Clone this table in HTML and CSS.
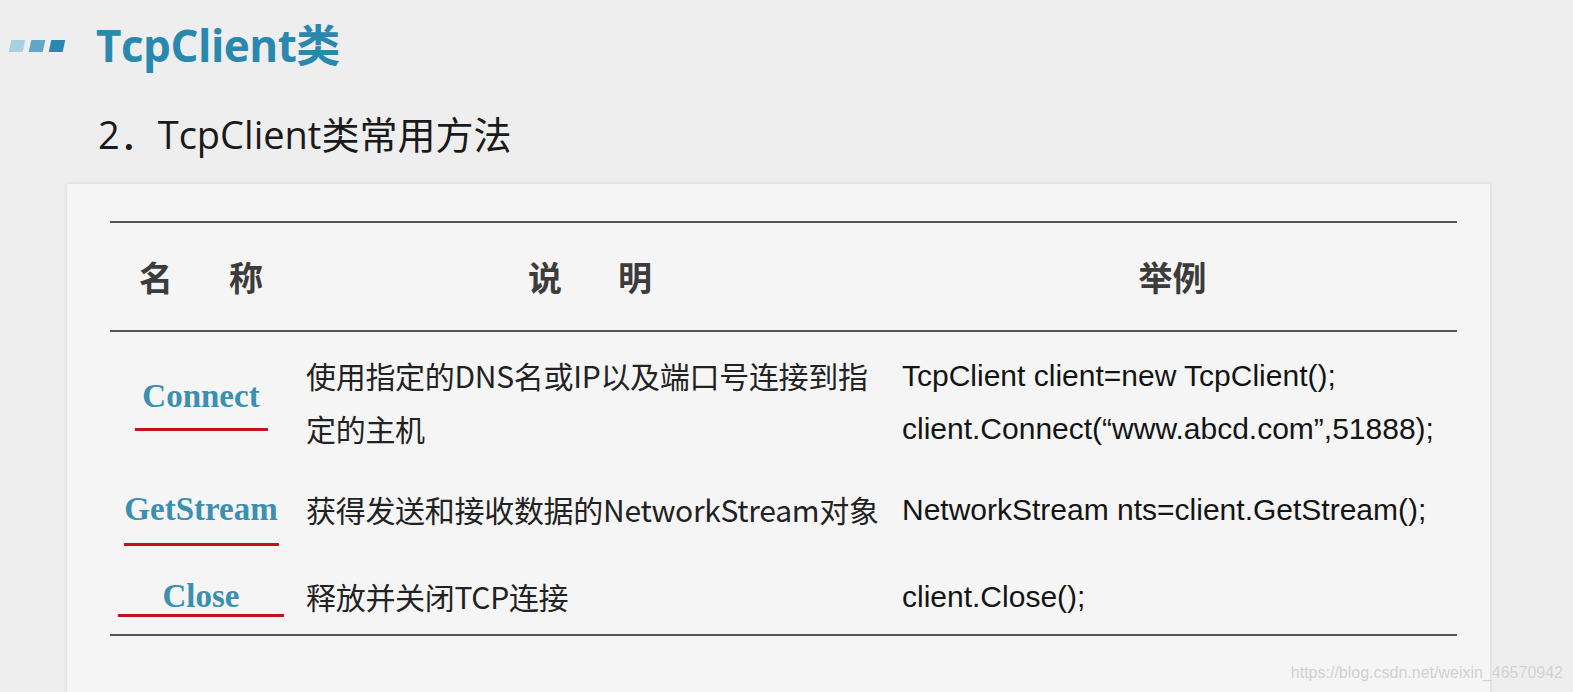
FILE: index.html
```html
<!DOCTYPE html>
<html lang="zh-CN">
<head>
    <meta charset="UTF-8">
    <title>TcpClient类</title>
    <link rel="stylesheet" href="styles.css">
</head>
<body>
    <div class="slide">
        <div class="title">
            <div class="marks">
                <span class="mark mark-1"></span>
                <span class="mark mark-2"></span>
                <span class="mark mark-3"></span>
            </div>
            <h1>TcpClient类</h1>
        </div>
        <h2>2．TcpClient类常用方法</h2>

        <div class="card">
            <div class="table">
                <div class="row head">
                    <div class="th"><span class="spaced">名　称</span></div>
                    <div class="th"><span class="spaced">说　明</span></div>
                    <div class="th">举例</div>
                </div>

                <div class="row row-1">
                    <div class="cell c-name">
                        <span class="method">Connect</span>
                        <span class="line"></span>
                    </div>
                    <div class="cell c-desc">使用指定的DNS名或IP以及端口号连接到指定的主机</div>
                    <div class="cell c-code">
                        TcpClient client=new TcpClient();<br>
                        client.Connect(“www.abcd.com”,51888);
                    </div>
                </div>

                <div class="row row-2">
                    <div class="cell c-name">
                        <span class="method">GetStream</span>
                        <span class="line"></span>
                    </div>
                    <div class="cell c-desc">获得发送和接收数据的NetworkStream对象</div>
                    <div class="cell c-code">NetworkStream nts=client.GetStream();</div>
                </div>

                <div class="row row-3">
                    <div class="cell c-name">
                        <span class="method">Close</span>
                        <span class="line"></span>
                    </div>
                    <div class="cell c-desc">释放并关闭TCP连接</div>
                    <div class="cell c-code">client.Close();</div>
                </div>
            </div>
        </div>
    </div>

    <div class="watermark">https://blog.csdn.net/weixin_46570942</div>
</body>
</html>
```

FILE: styles.css
```css
html, body {
    margin: 0;
    height: 100%;
    overflow: hidden;
}

body {
    background: #eeeeee;
    font-family: "Open Sans", "Noto Sans CJK SC", sans-serif;
    position: relative;
}

.slide {
    padding: 12px 0 0 8px;
}

.title {
    display: flex;
    align-items: center;
    height: 62px;
}

.marks {
    display: flex;
    gap: 6px;
    margin: 6px 0 0 2px;
}

.mark {
    width: 14px;
    height: 12px;
    transform: skewX(-12deg);
}

.mark-1 { background: #a9d0e1; }
.mark-2 { background: #5ea7c8; }
.mark-3 { background: #2a87ae; }

h1 {
    margin: 0 0 0 32px;
    font-size: 44px;
    font-weight: 700;
    color: #2a88af;
    letter-spacing: -0.5px;
}

h2 {
    margin: 35px 0 0 90px;
    font-size: 38px;
    font-weight: 400;
    color: #1a1a1a;
    line-height: 50px;
}

.card {
    margin: 25px 0 0 59px;
    width: 1423px;
    height: 560px;
    background: #f5f5f5;
    box-shadow: 0 0 4px rgba(0, 0, 0, 0.12);
    padding: 37px 0 0 43px;
    box-sizing: border-box;
}

.table {
    width: 1347px;
    border-top: 2px solid #555;
    border-bottom: 2px solid #555;
}

.row {
    display: grid;
    grid-template-columns: 182px 596px 1fr;
    box-sizing: border-box;
}

.head {
    height: 109px;
    border-bottom: 2px solid #555;
    align-items: center;
    font-family: "Noto Sans CJK SC", sans-serif;
    font-weight: 700;
    font-size: 34px;
    color: #3c3c3c;
}

.th {
    text-align: center;
    white-space: nowrap;
}

.spaced {
    letter-spacing: 11px;
    padding-left: 11px;
}

.row-1, .row-2, .row-3 {
    padding-top: 17px;
    align-items: start;
}

.row-1 { height: 134px; }
.row-2 { height: 87px; }
.row-3 { height: 81px; }

.c-desc {
    font-family: "Noto Sans CJK SC", sans-serif;
    font-size: 30px;
    line-height: 53px;
    color: #222;
    padding-left: 14px;
    letter-spacing: -0.3px;
}

.c-code {
    font-family: "Liberation Sans", Arial, sans-serif;
    font-size: 30px;
    line-height: 53px;
    color: #141414;
    padding-left: 14px;
}

.c-name {
    display: flex;
    flex-direction: column;
    align-items: center;
}

.method {
    font-family: "Liberation Serif", "Times New Roman", serif;
    font-weight: 700;
    font-size: 33px;
    line-height: 36px;
    color: #3b8fb0;
}

.line {
    display: block;
    height: 3px;
    background: #c4121b;
}

.row-1 .method { margin-top: 29px; }
.row-1 .line { margin-top: 14px; width: 133px; }

.row-2 .method { margin-top: 8px; }
.row-2 .line { margin-top: 16px; width: 155px; }

.row-3 .method { margin-top: 8px; }
.row-3 .line { margin-top: 0; width: 166px; }

.watermark {
    position: absolute;
    right: 10px;
    bottom: 10px;
    font-family: "Liberation Sans", Arial, sans-serif;
    font-size: 16px;
    color: #cfcfcf;
    text-shadow: 0 0 1px rgba(255, 255, 255, 0.8);
}
```
